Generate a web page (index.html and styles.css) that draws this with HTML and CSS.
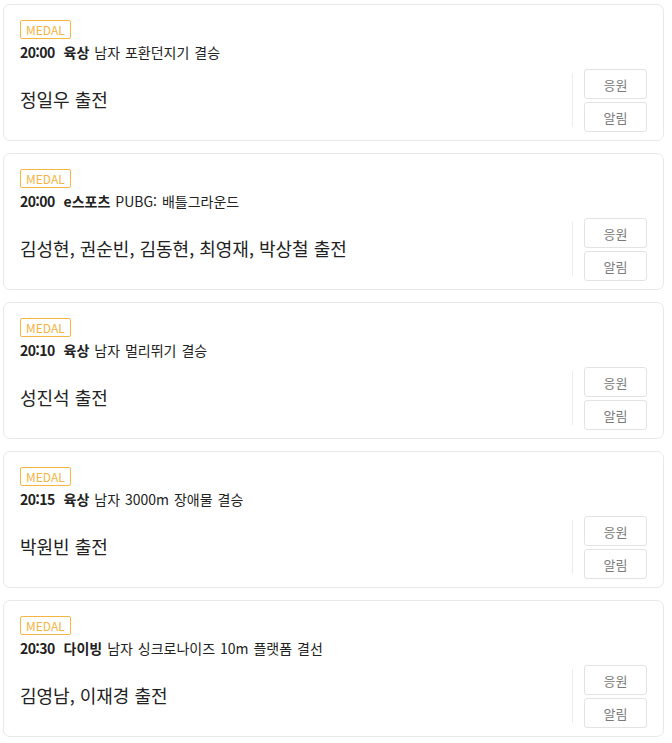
FILE: index.html
```html
<!DOCTYPE html>
<html lang="ko">
<head>
<meta charset="utf-8">
<link rel="stylesheet" href="styles.css">
</head>
<body>
<div class="list">
  <div class="card">
    <span class="badge">MEDAL</span>
    <div class="title"><span class="time">20:00</span><b>육상</b> 남자 포환던지기 결승</div>
    <div class="row">
      <div class="players">정일우 출전</div>
      <div class="divider"></div>
      <div class="buttons"><button class="btn">응원</button><button class="btn">알림</button></div>
    </div>
  </div>
  <div class="card">
    <span class="badge">MEDAL</span>
    <div class="title"><span class="time">20:00</span><b>e스포츠</b> PUBG: 배틀그라운드</div>
    <div class="row">
      <div class="players">김성현, 권순빈, 김동현, 최영재, 박상철 출전</div>
      <div class="divider"></div>
      <div class="buttons"><button class="btn">응원</button><button class="btn">알림</button></div>
    </div>
  </div>
  <div class="card">
    <span class="badge">MEDAL</span>
    <div class="title"><span class="time">20:10</span><b>육상</b> 남자 멀리뛰기 결승</div>
    <div class="row">
      <div class="players">성진석 출전</div>
      <div class="divider"></div>
      <div class="buttons"><button class="btn">응원</button><button class="btn">알림</button></div>
    </div>
  </div>
  <div class="card">
    <span class="badge">MEDAL</span>
    <div class="title"><span class="time">20:15</span><b>육상</b> 남자 3000m 장애물 결승</div>
    <div class="row">
      <div class="players">박원빈 출전</div>
      <div class="divider"></div>
      <div class="buttons"><button class="btn">응원</button><button class="btn">알림</button></div>
    </div>
  </div>
  <div class="card">
    <span class="badge">MEDAL</span>
    <div class="title"><span class="time">20:30</span><b>다이빙</b> 남자 싱크로나이즈 10m 플랫폼 결선</div>
    <div class="row">
      <div class="players">김영남, 이재경 출전</div>
      <div class="divider"></div>
      <div class="buttons"><button class="btn">응원</button><button class="btn">알림</button></div>
    </div>
  </div>
</div>
</body>
</html>
```

FILE: styles.css
```css
* { box-sizing: border-box; }
html, body {
  margin: 0;
  padding: 0;
  background: #fff;
  font-family: "Noto Sans CJK KR", "Noto Sans", sans-serif;
  color: #222;
}
.list {
  display: flex;
  flex-direction: column;
  gap: 12px;
  padding: 4px 8px 0 3px;
}
.card {
  border: 1px solid #e8e8ec;
  border-radius: 7px;
  padding: 15px 16px 8px 16px;
  display: flex;
  flex-direction: column;
  align-items: flex-start;
}
.badge {
  display: inline-flex;
  align-items: center;
  height: 19px;
  padding: 0 5px 0 5px;
  border: 1px solid #f6b646;
  border-radius: 2px;
  color: #f5b342;
  font-size: 12px;
  line-height: 1;
}
.title {
  margin-top: 3px;
  height: 20px;
  line-height: 20px;
  font-size: 14px;
  color: #222;
  white-space: nowrap;
  word-spacing: 1px;
}
.title .time {
  display: inline-block;
  font-weight: 700;
  margin-right: 9px;
  letter-spacing: -0.6px;
}
.title b { font-weight: 700; }
.row {
  margin-top: 7px;
  align-self: stretch;
  display: flex;
  align-items: center;
  height: 63px;
}
.players {
  flex: 1;
  font-size: 18px;
  color: #222;
  line-height: 24px;
  padding-bottom: 3px;
}
.divider {
  width: 1px;
  align-self: stretch;
  margin: 4px 11px 5px 0;
  background: #ececec;
}
.buttons {
  display: flex;
  flex-direction: column;
  gap: 3px;
}
.btn {
  width: 63px;
  height: 30px;
  border: 1px solid #e3e3e3;
  border-radius: 3px;
  background: #fff;
  color: #7a7a7a;
  font-family: inherit;
  font-size: 13px;
  padding: 0;
  cursor: pointer;
}
```
